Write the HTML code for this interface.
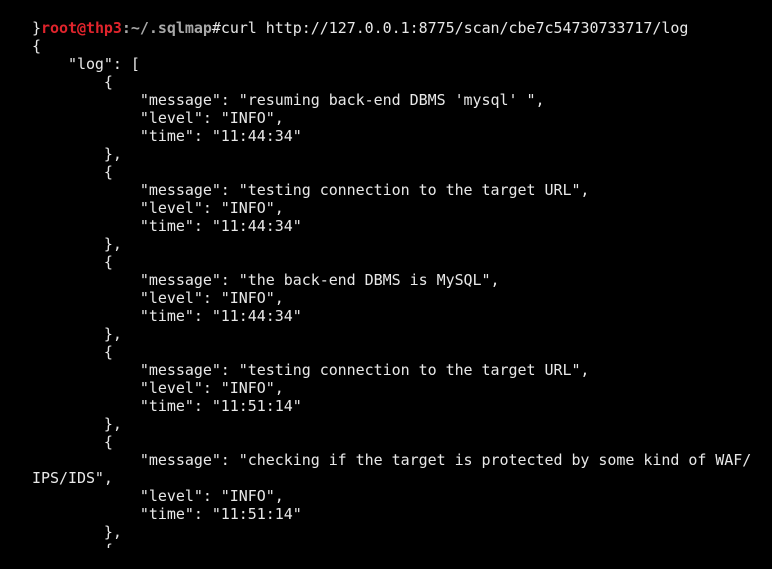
<!DOCTYPE html>
<html><head><style>
html,body{margin:0;padding:0;background:#000;width:772px;height:569px;overflow:hidden}
pre{margin:0;position:absolute;left:32px;top:19px;height:529px;overflow:hidden;font-family:"DejaVu Sans Mono","Liberation Mono",monospace;font-size:15px;line-height:18px;color:#e8e8e8;letter-spacing:-0.04px}
.r{color:#e0242c;font-weight:bold}
.g{color:#a8a8a8;font-weight:bold}
</style></head><body>
<pre>}<span class="r">root@thp3</span><span class="g">:~/.sqlmap</span>#curl http://127.0.0.1:8775/scan/cbe7c54730733717/log
{
    "log": [
        {
            "message": "resuming back-end DBMS 'mysql' ",
            "level": "INFO",
            "time": "11:44:34"
        },
        {
            "message": "testing connection to the target URL",
            "level": "INFO",
            "time": "11:44:34"
        },
        {
            "message": "the back-end DBMS is MySQL",
            "level": "INFO",
            "time": "11:44:34"
        },
        {
            "message": "testing connection to the target URL",
            "level": "INFO",
            "time": "11:51:14"
        },
        {
            "message": "checking if the target is protected by some kind of WAF/
IPS/IDS",
            "level": "INFO",
            "time": "11:51:14"
        },
        {</pre>
</body></html>
